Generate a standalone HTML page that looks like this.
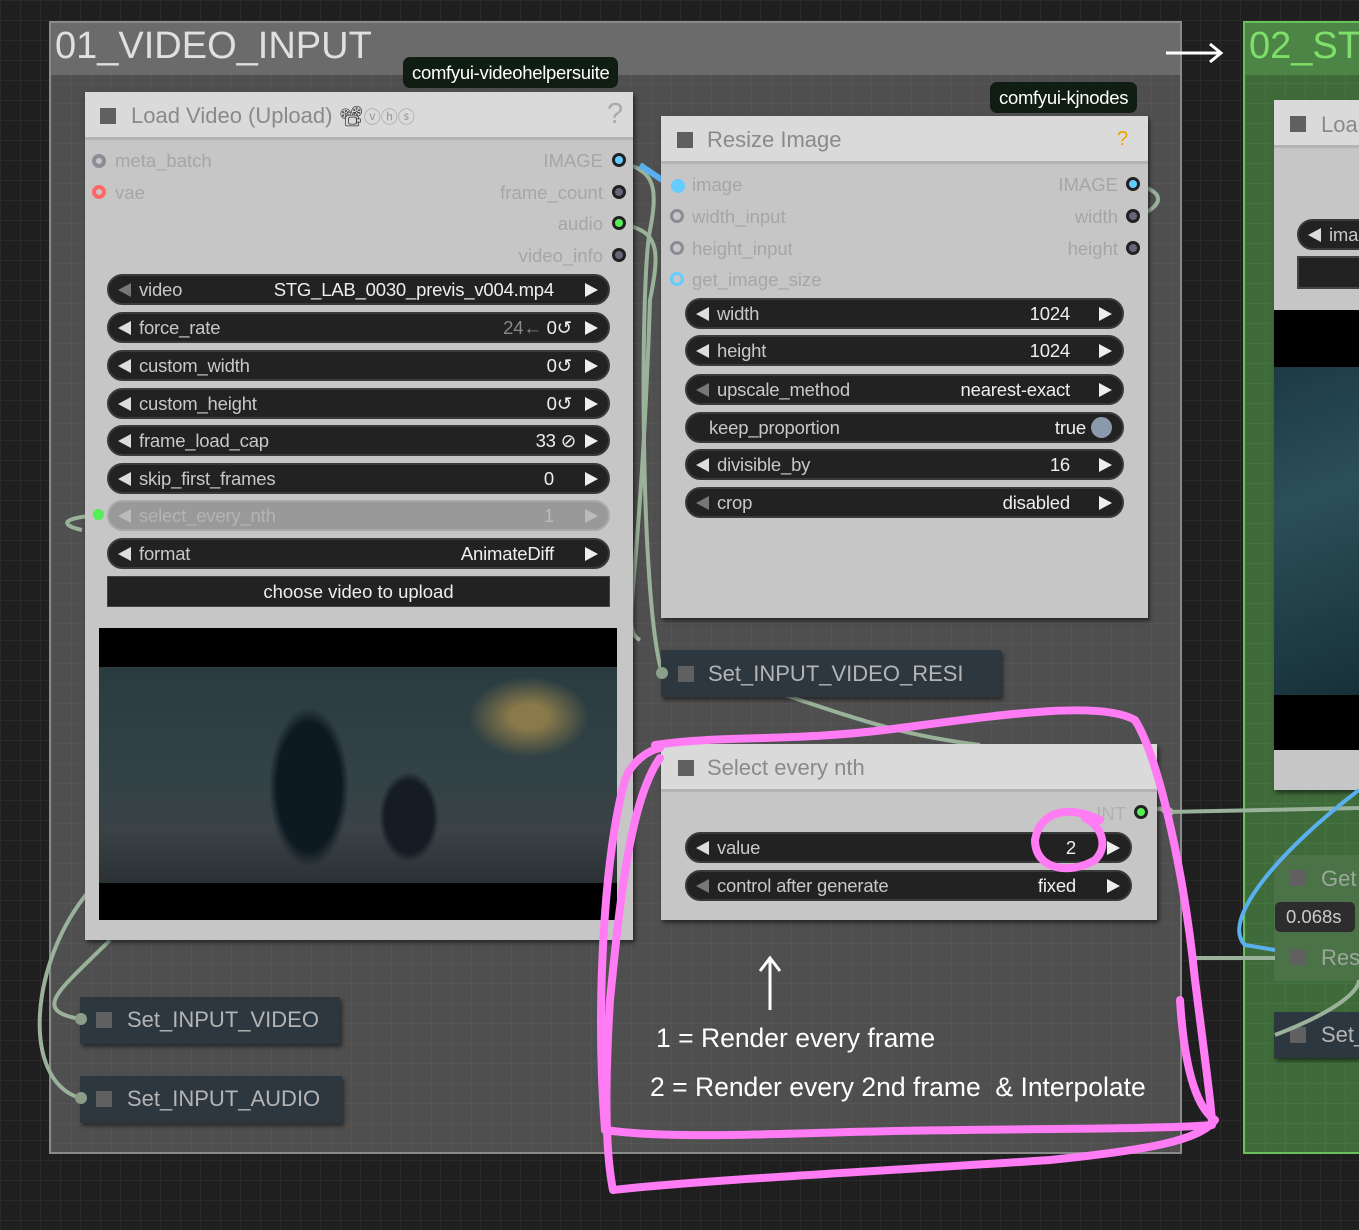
<!DOCTYPE html>
<html><head><meta charset="utf-8"><style>
*{box-sizing:border-box;margin:0;padding:0}
body{width:1359px;height:1230px;overflow:hidden;background:#1f1f1f;font-family:"Liberation Sans",sans-serif;position:relative;
background-image:linear-gradient(#2a2a2a 1px,transparent 1px),linear-gradient(90deg,#2a2a2a 1px,transparent 1px);background-size:20px 20px}
.a{position:absolute}
.grp{position:absolute;background:#4f4f4f;border:2px solid #8a8a8a;
background-image:linear-gradient(#555 1px,transparent 1px),linear-gradient(90deg,#555 1px,transparent 1px);background-size:20px 20px}
.node{position:absolute;background:#c6c6c6;box-shadow:2px 3px 4px rgba(0,0,0,.5)}
.tb{position:absolute;left:0;right:0;top:0;background:#dadada;border-bottom:3px solid #b4b4b4;color:#8a8a8a;font-size:22px;padding-left:46px}
.sq{position:absolute;width:16px;height:16px;background:#606060}
.w{position:absolute;height:31px;background:#222;border-radius:16px;border:2px solid #3a3a3a;color:#ddd;font-size:18.5px;line-height:27px;letter-spacing:-0.2px}
.w .l{position:absolute;left:30px;color:#c8c8c8}
.w .v{position:absolute;right:40px;color:#eee}
.w .la{position:absolute;left:9px;top:7px;width:0;height:0;border-top:7px solid transparent;border-bottom:7px solid transparent;border-right:13px solid #ddd}
.w .ra{position:absolute;right:10px;top:7px;width:0;height:0;border-top:7px solid transparent;border-bottom:7px solid transparent;border-left:13px solid #eee}
.w .la.d{border-right-color:#777}
.sl{position:absolute;font-size:18.5px;color:#a6a6a6}
.dot{position:absolute;width:14px;height:14px;border-radius:50%;border:3px solid #222}
.tag{position:absolute;background:#0f1d12;color:#fff;font-size:18.5px;border-radius:7px;padding:0 9px;height:31px;line-height:31px;letter-spacing:-0.3px}
.sn{position:absolute;background:#2c3740;color:#b4b4b4;font-size:22px;box-shadow:2px 3px 4px rgba(0,0,0,.5)}
.ann{position:absolute;color:#fff;font-size:26.5px}
</style></head><body>

<div class="grp" style="left:49px;top:21px;width:1133px;height:1133px"></div>
<div class="a" style="left:51px;top:23px;width:1129px;height:52px;background:#6b6b6b"></div>
<div class="a" style="left:55px;top:25px;font-size:38px;color:#e0e0e0">01_VIDEO_INPUT</div>

<div class="a" style="left:1243px;top:21px;width:130px;height:1133px;background:#3f6a3a;border:2px solid #6cc05a;
background-image:linear-gradient(#467342 1px,transparent 1px),linear-gradient(90deg,#467342 1px,transparent 1px);background-size:20px 20px"></div>
<div class="a" style="left:1245px;top:23px;width:120px;height:52px;background:#4d8547"></div>
<div class="a" style="left:1249px;top:25px;font-size:38px;color:#7ee06a">02_ST</div>
<svg class="a" style="left:1160px;top:40px" width="70" height="26"><path d="M6 13 H60 M50 4 L61 13 L50 22" stroke="#fff" stroke-width="3" fill="none"/></svg>

<div class="node" style="left:1274px;top:100px;width:100px;height:690px"></div>
<div class="a" style="left:1274px;top:100px;width:100px;height:48px;background:#dadada;border-bottom:3px solid #b4b4b4"></div>
<div class="sq" style="left:1290px;top:116px"></div>
<div class="a" style="left:1321px;top:112px;font-size:22px;color:#8a8a8a">Loa</div>
<div class="w" style="left:1297px;top:219px;width:80px"><div class="la"></div><div class="l">ima</div></div>
<div class="a" style="left:1297px;top:256px;width:70px;height:33px;background:#222;border:2px solid #444"></div>
<div class="a" style="left:1274px;top:310px;width:90px;height:440px;background:#000"></div>
<div class="a" style="left:1274px;top:367px;width:90px;height:328px;background:linear-gradient(160deg,#1d3a44,#2c5058 40%,#173038)"></div>
<div class="a" style="left:1274px;top:855px;width:90px;height:126px;background:#4c7247"></div>
<div class="sq" style="left:1290px;top:870px"></div>
<div class="a" style="left:1321px;top:866px;font-size:22px;color:#9aa89a">Get</div>
<div class="sq" style="left:1290px;top:949px"></div>
<div class="a" style="left:1321px;top:945px;font-size:22px;color:#9aa89a">Res</div>
<div class="a" style="left:1275px;top:902px;width:80px;height:30px;background:#2d2d2d;border-radius:5px;color:#ccc;font-size:18.5px;line-height:30px;padding-left:11px">0.068s</div>
<div class="sn" style="left:1274px;top:1012px;width:90px;height:46px"></div>
<div class="sq" style="left:1290px;top:1027px"></div>
<div class="a" style="left:1321px;top:1022px;font-size:22px;color:#b4b4b4">Set_</div>

<svg class="a" style="left:0;top:0" width="1359" height="1230">
<g fill="none" stroke="#9bb29a" stroke-width="4">
<path d="M620 162 C650 170,660 180,650 230 C640 280,640 600,662 673"/>
<path d="M620 224 C660 230,660 250,650 300 C640 600,620 630,640 640"/>
<path d="M1134 185 C1165 190,1165 205,1140 215"/>
<path d="M99 515 C60 518,60 525,82 530"/>
<path d="M110 940 C60 990,30 1010,80 1019"/>
<path d="M90 890 C30 960,20 1080,80 1098"/>
<path d="M770 690 C860 720,900 735,980 745"/>
<path d="M1142 813 C1180 800,1175 820,1165 812 L1359 808"/>
<path d="M1190 958 L1275 958"/>
<path d="M1275 1035 C1340 1010,1359 990,1359 980"/>
</g>
<path d="M640 165 C650 172,655 175,662 180" stroke="#5ab0ee" stroke-width="6" fill="none"/>
<path d="M1359 790 C1280 850,1220 920,1245 945 L1275 950" stroke="#5ab0ee" stroke-width="4" fill="none"/>
</svg>

<div class="tag" style="left:403px;top:57px">comfyui-videohelpersuite</div>
<div class="node" style="left:85px;top:92px;width:548px;height:848px"></div>
<div class="tb" style="left:85px;top:92px;width:548px;height:48px;position:absolute;line-height:47px">Load Video (Upload) <span style="font-size:20px;color:#333">📽</span><span style="font-size:17px;color:#999">ⓥⓗⓢ</span></div>
<div class="sq" style="left:100px;top:108px"></div>
<div class="a" style="left:607px;top:98px;font-size:29px;color:#aaa">?</div>
<div class="dot" style="left:92px;top:154px;background:#c6c6c6;border-color:#8d8d99;border-width:4px"></div><div class="sl" style="left:115px;top:150px">meta_batch</div>
<div class="dot" style="left:92px;top:185px;background:#c6c6c6;border-color:#f66;border-width:4px"></div><div class="sl" style="left:115px;top:182px">vae</div>
<div class="sl" style="right:756px;top:150px">IMAGE</div><div class="dot" style="left:612px;top:153px;background:#6cf"></div>
<div class="sl" style="right:756px;top:182px">frame_count</div><div class="dot" style="left:612px;top:185px;background:#667"></div>
<div class="sl" style="right:756px;top:213px">audio</div><div class="dot" style="left:612px;top:216px;background:#5e5"></div>
<div class="sl" style="right:756px;top:245px">video_info</div><div class="dot" style="left:612px;top:248px;background:#667"></div>

<div class="w" style="left:107px;top:274px;width:503px"><div class="la d"></div><div class="l">video</div><div class="v" style="right:54px">STG_LAB_0030_previs_v004.mp4</div><div class="ra"></div></div>
<div class="w" style="left:107px;top:312px;width:503px"><div class="la"></div><div class="l">force_rate</div><div class="v" style="right:36px"><span style="color:#888">24←</span> 0↺</div><div class="ra"></div></div>
<div class="w" style="left:107px;top:350px;width:503px"><div class="la"></div><div class="l">custom_width</div><div class="v" style="right:36px">0↺</div><div class="ra"></div></div>
<div class="w" style="left:107px;top:388px;width:503px"><div class="la"></div><div class="l">custom_height</div><div class="v" style="right:36px">0↺</div><div class="ra"></div></div>
<div class="w" style="left:107px;top:425px;width:503px"><div class="la"></div><div class="l">frame_load_cap</div><div class="v" style="right:32px">33 ⊘</div><div class="ra"></div></div>
<div class="w" style="left:107px;top:463px;width:503px"><div class="la"></div><div class="l">skip_first_frames</div><div class="v" style="right:54px">0</div><div class="ra"></div></div>
<div class="w" style="left:107px;top:500px;width:503px;background:#999;border-color:#aaa"><div class="la" style="border-right-color:#bbb"></div><div class="l" style="color:#b4b4b4">select_every_nth</div><div class="v" style="right:54px;color:#bbb">1</div><div class="ra" style="border-left-color:#bbb"></div></div>
<div class="dot" style="left:93px;top:509px;width:11px;height:11px;background:#5e5;border:0"></div>
<div class="w" style="left:107px;top:538px;width:503px"><div class="la"></div><div class="l">format</div><div class="v" style="right:54px">AnimateDiff</div><div class="ra"></div></div>
<div class="a" style="left:107px;top:576px;width:503px;height:31px;background:#222;border:1px solid #444;color:#eee;font-size:18.5px;text-align:center;line-height:30px">choose video to upload</div>

<div class="a" style="left:99px;top:628px;width:518px;height:292px;background:#000"></div>
<div class="a" style="left:99px;top:667px;width:518px;height:216px;background:
radial-gradient(ellipse 40px 80px at 210px 120px,#0e1a22 80%,transparent),
radial-gradient(ellipse 30px 45px at 310px 150px,#151c24 80%,transparent),
radial-gradient(ellipse 60px 40px at 430px 50px,#8a7a4a 30%,transparent),
linear-gradient(180deg,#2a3c40,#324246 50%,#3a4246 75%,#2b3134)"></div>

<div class="tag" style="left:990px;top:82px">comfyui-kjnodes</div>
<div class="node" style="left:661px;top:116px;width:487px;height:502px"></div>
<div class="tb" style="left:661px;top:116px;width:487px;height:48px;position:absolute;line-height:47px">Resize Image</div>
<div class="sq" style="left:677px;top:132px"></div>
<div class="a" style="left:1117px;top:128px;font-size:20px;color:#f5a000">?</div>
<div class="dot" style="left:671px;top:179px;background:#6cf;border:0"></div><div class="sl" style="left:692px;top:174px">image</div>
<div class="dot" style="left:670px;top:209px;background:#c6c6c6;border-color:#8a8a99"></div><div class="sl" style="left:692px;top:206px">width_input</div>
<div class="dot" style="left:670px;top:241px;background:#c6c6c6;border-color:#8a8a99"></div><div class="sl" style="left:692px;top:238px">height_input</div>
<div class="dot" style="left:670px;top:272px;background:#c6c6c6;border-color:#6cf"></div><div class="sl" style="left:692px;top:269px">get_image_size</div>
<div class="sl" style="right:241px;top:174px">IMAGE</div><div class="dot" style="left:1126px;top:177px;background:#6cf"></div>
<div class="sl" style="right:241px;top:206px">width</div><div class="dot" style="left:1126px;top:209px;background:#667"></div>
<div class="sl" style="right:241px;top:238px">height</div><div class="dot" style="left:1126px;top:241px;background:#667"></div>
<div class="w" style="left:685px;top:298px;width:439px"><div class="la"></div><div class="l">width</div><div class="v" style="right:52px">1024</div><div class="ra"></div></div>
<div class="w" style="left:685px;top:335px;width:439px"><div class="la"></div><div class="l">height</div><div class="v" style="right:52px">1024</div><div class="ra"></div></div>
<div class="w" style="left:685px;top:374px;width:439px"><div class="la d"></div><div class="l">upscale_method</div><div class="v" style="right:52px">nearest-exact</div><div class="ra"></div></div>
<div class="w" style="left:685px;top:412px;width:439px"><div class="l" style="left:22px">keep_proportion</div><div class="v" style="right:36px">true</div><div class="a" style="right:10px;top:3px;width:21px;height:21px;border-radius:50%;background:#8a9aac"></div></div>
<div class="w" style="left:685px;top:449px;width:439px"><div class="la"></div><div class="l">divisible_by</div><div class="v" style="right:52px">16</div><div class="ra"></div></div>
<div class="w" style="left:685px;top:487px;width:439px"><div class="la d"></div><div class="l">crop</div><div class="v" style="right:52px">disabled</div><div class="ra"></div></div>

<div class="sn" style="left:661px;top:650px;width:340px;height:47px;line-height:47px;padding-left:47px">Set_INPUT_VIDEO_RESI</div>
<div class="sq" style="left:678px;top:666px"></div>
<div class="dot" style="left:656px;top:667px;width:12px;height:12px;background:#8a9e88;border:0"></div>
<div class="sn" style="left:80px;top:997px;width:260px;height:47px;line-height:46px;padding-left:47px">Set_INPUT_VIDEO</div>
<div class="sq" style="left:96px;top:1012px"></div>
<div class="dot" style="left:75px;top:1013px;width:12px;height:12px;background:#8a9e88;border:0"></div>
<div class="sn" style="left:80px;top:1076px;width:262px;height:47px;line-height:46px;padding-left:47px">Set_INPUT_AUDIO</div>
<div class="sq" style="left:96px;top:1091px"></div>
<div class="dot" style="left:75px;top:1092px;width:12px;height:12px;background:#8a9e88;border:0"></div>

<div class="node" style="left:661px;top:744px;width:496px;height:176px"></div>
<div class="tb" style="left:661px;top:744px;width:496px;height:48px;position:absolute;line-height:47px">Select every nth</div>
<div class="sq" style="left:678px;top:760px"></div>
<div class="sl" style="right:233px;top:803px;color:#b0b0b0">INT</div><div class="dot" style="left:1134px;top:805px;background:#5e5"></div>
<div class="w" style="left:685px;top:832px;width:447px"><div class="la"></div><div class="l">value</div><div class="v" style="right:54px">2</div><div class="ra"></div></div>
<div class="w" style="left:685px;top:870px;width:447px"><div class="la d"></div><div class="l">control after generate</div><div class="v" style="right:54px">fixed</div><div class="ra"></div></div>

<svg class="a" style="left:755px;top:955px" width="30" height="58"><path d="M15 55 V4 M5 16 L15 3 L25 16" stroke="#fff" stroke-width="3" fill="none"/></svg>
<div class="ann" style="left:656px;top:1023px">1 = Render every frame</div>
<div class="ann" style="left:650px;top:1072px">2 = Render every 2nd frame&nbsp; &amp; Interpolate</div>

<svg class="a" style="left:0;top:0" width="1359" height="1230">
<g fill="none" stroke="#ff7cf5" stroke-width="8" stroke-linecap="round" stroke-linejoin="round">
<path d="M655 745 C720 735,800 742,900 728 C1000 715,1100 700,1135 720 C1160 760,1185 880,1195 980 C1205 1060,1212 1110,1212 1125 C1150 1130,1000 1128,850 1132 C750 1135,660 1138,605 1130 C595 1000,605 850,625 780 C632 760,650 750,660 748"/>
<path d="M660 758 C630 800,620 900,610 1000 C605 1080,605 1150,613 1190 C700 1180,900 1170,1050 1160 C1150 1150,1200 1140,1215 1120 C1200 1110,1185 1080,1180 1000"/>
<path d="M1100 820 C1070 805,1040 810,1035 840 C1035 870,1070 875,1095 860 C1110 845,1100 825,1085 818"/>
</g>
</svg>
</body></html>
